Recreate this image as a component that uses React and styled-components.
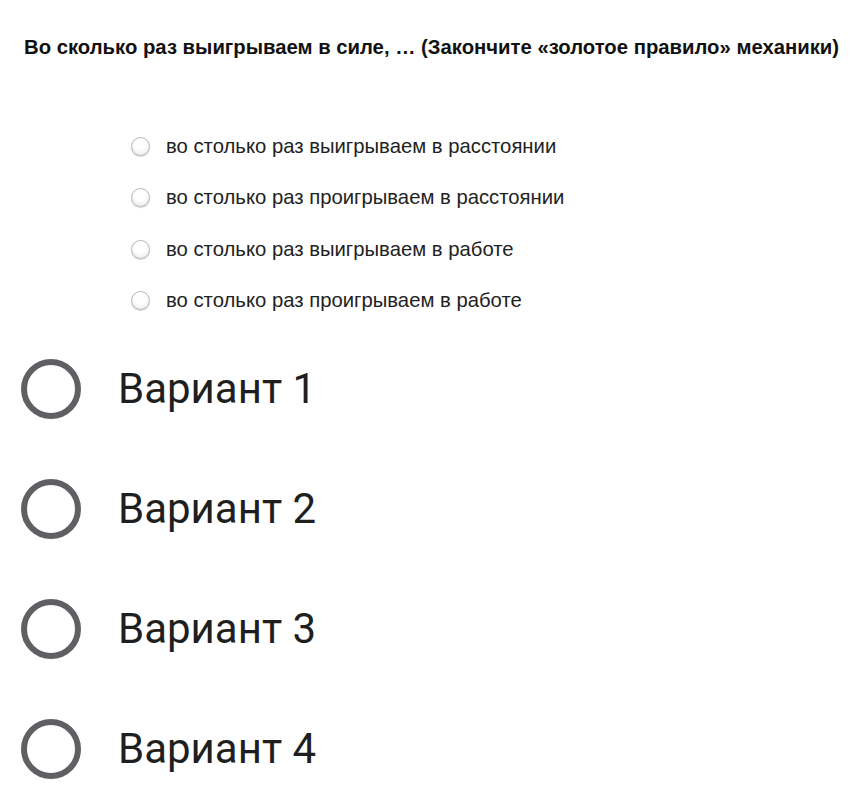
import styled, {createGlobalStyle} from "styled-components";

const GlobalStyle = createGlobalStyle`
  html, body {
    margin: 0;
    padding: 0;
    background: #ffffff;
  }
`;

const questionOptions = [
  "во столько раз выигрываем в расстоянии",
  "во столько раз проигрываем в расстоянии",
  "во столько раз выигрываем в работе",
  "во столько раз проигрываем в работе",
];

const variants = ["Вариант 1", "Вариант 2", "Вариант 3", "Вариант 4"];

export default function App() {
  return (
    <Page>
      <GlobalStyle />
      <Question>
        <Title>
          Во сколько раз выигрываем в силе, … (Закончите «золотое правило» механики)
        </Title>
        <SmallList>
          {questionOptions.map(option => (
            <SmallRow key={option}>
              <SmallRadio />
              <SmallLabel>{option}</SmallLabel>
            </SmallRow>
          ))}
        </SmallList>
      </Question>
      <VariantList>
        {variants.map(variant => (
          <VariantRow key={variant}>
            <BigRadio />
            <VariantLabel>{variant}</VariantLabel>
          </VariantRow>
        ))}
      </VariantList>
    </Page>
  );
}

const Page = styled.div`
  width: 864px;
  height: 792px;
  overflow: hidden;
  background: #fff;
`;

const Question = styled.section`
  padding: 35px 0 0 24px;
`;

const Title = styled.h1`
  margin: 0;
  font-family: "Liberation Sans", Arial, sans-serif;
  font-weight: bold;
  font-size: 20.3px;
  line-height: 24px;
  color: #111;
  white-space: nowrap;
`;

const SmallList = styled.div`
  display: flex;
  flex-direction: column;
  gap: 27.5px;
  margin-top: 75px;
  padding-left: 107px;
`;

const SmallRow = styled.div`
  display: flex;
  align-items: center;
  height: 24px;
`;

const SmallRadio = styled.span`
  width: 19px;
  height: 19px;
  border-radius: 50%;
  box-sizing: border-box;
  border: 1px solid #b8b8b8;
  background: radial-gradient(circle at 50% 35%, #ffffff 40%, #e4e4e4 100%);
  box-shadow: 0 1px 1px rgba(0, 0, 0, 0.18);
  flex-shrink: 0;
`;

const SmallLabel = styled.span`
  margin-left: 16px;
  font-family: "Liberation Sans", Arial, sans-serif;
  font-size: 20.3px;
  color: #222;
`;

const VariantList = styled.div`
  display: flex;
  flex-direction: column;
  margin-top: 16px;
  padding-left: 21px;
`;

const VariantRow = styled.div`
  display: flex;
  align-items: center;
  height: 120px;
`;

const BigRadio = styled.span`
  width: 60px;
  height: 60px;
  box-sizing: border-box;
  border-radius: 50%;
  border: 6px solid #5f6064;
  flex-shrink: 0;
`;

const VariantLabel = styled.span`
  margin-left: 37px;
  font-family: Roboto, "Noto Sans", sans-serif;
  font-size: 42px;
  color: #1f1f1f;
`;
